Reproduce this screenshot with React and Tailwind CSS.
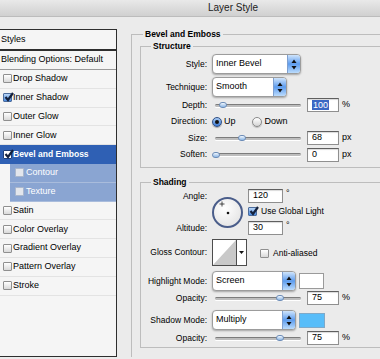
import React from "react";

const styleItems = [
  { label: "Drop Shadow" },
  { label: "Inner Shadow", checked: true },
  { label: "Outer Glow" },
  { label: "Inner Glow" },
  { label: "Bevel and Emboss", checked: true, active: true },
  { label: "Contour", sub: true },
  { label: "Texture", sub: true },
  { label: "Satin" },
  { label: "Color Overlay" },
  { label: "Gradient Overlay" },
  { label: "Pattern Overlay" },
  { label: "Stroke" },
];

function Tick({ color = "#14213d" }) {
  return (
    <svg width="10" height="10" viewBox="0 0 10 10" className="absolute -top-[2px] left-0">
      <path d="M1.5 5 L4 8 L9 1" fill="none" stroke={color} strokeWidth="2.2" />
    </svg>
  );
}

function Check({ checked, tone = "plain" }) {
  let box = "border-[#8f8f8f] bg-gradient-to-b from-white to-[#d9d9d9]";
  if (tone === "blue") box = "border-[#4c6c9c] bg-gradient-to-b from-[#b9d6f7] to-[#4a8ade]";
  if (tone === "active") box = "border-[#1d3f7a] bg-white";
  if (tone === "sub") box = "border-[#aab7cc] bg-[#e3e6ec]";
  return (
    <div className={`relative w-[9px] h-[9px] shrink-0 border rounded-[1px] ${box}`}>
      {checked && <Tick />}
    </div>
  );
}

function StylesList() {
  return (
    <div className="w-[117px] h-[328px] mt-[12px] shrink-0 bg-[#f5f5f5] border-t border-r border-b border-[#2e2e2e] text-[9px]">
      <div className="h-[21px] flex items-center pl-[1px] border-b-2 border-[#2e2e2e]">Styles</div>
      <div className="h-[19px] flex items-center pl-[1px] border-b border-[#9a9a9a]">Blending Options: Default</div>
      {styleItems.map((it) =>
        it.sub ? (
          <div key={it.label} className="h-[18.8px] ml-[10px] flex items-center gap-[2px] pl-[5px] bg-[#8aa5d2] border-b border-[#a9bcdc] text-white">
            <Check tone="sub" />
            <span>{it.label}</span>
          </div>
        ) : it.active ? (
          <div key={it.label} className="h-[18.8px] flex items-center gap-[1px] pl-[3px] bg-[#2f60b4] text-white font-bold text-[8.5px]">
            <Check checked tone="active" />
            <span>{it.label}</span>
          </div>
        ) : (
          <div key={it.label} className="h-[18.8px] flex items-center gap-[1px] pl-[3px] border-b border-[#e3e3e3]">
            <Check checked={it.checked} tone={it.checked ? "blue" : "plain"} />
            <span>{it.label}</span>
          </div>
        )
      )}
    </div>
  );
}

function Row({ label, className = "", children }) {
  return (
    <div className={`flex items-center ${className}`}>
      <div className="w-[66px] shrink-0 text-right text-[8.5px]">{label}</div>
      <div className="ml-[5px] flex items-center">{children}</div>
    </div>
  );
}

function Select({ value, w }) {
  return (
    <div className={`${w} h-[20px] flex rounded-[4px] border border-[#9c9c9c] bg-white shadow-[0_1px_2px_rgba(0,0,0,0.3)] overflow-hidden`}>
      <div className="flex-1 flex items-center pl-[3px] text-[9px]">{value}</div>
      <div className="w-[13px] flex items-center justify-center border-l border-[#7e9fcf] bg-gradient-to-b from-[#cfe4fb] via-[#5d9cee] to-[#bcdcfc]">
        <svg width="6" height="11" viewBox="0 0 6 11">
          <path d="M3 0.5 L5.5 4 L0.5 4 Z" fill="#111" />
          <path d="M3 10.5 L5.5 7 L0.5 7 Z" fill="#111" />
        </svg>
      </div>
    </div>
  );
}

function Slider({ at }) {
  return (
    <div className="relative ml-[3px] w-[86px] h-[10px] flex items-center">
      <div className="w-full h-[3px] rounded-full bg-[#bdbdbd] border-t border-[#7c7c7c] shadow-[0_1px_0_#ffffff]" />
      <div
        className="absolute top-[2px] w-[8px] h-[6px] rounded-full border border-[#6d8db8] bg-gradient-to-b from-[#f1f7fd] to-[#8cb6e4]"
        style={{ left: at - 4 }}
      />
    </div>
  );
}

function NumBox({ value, w = "w-[32px]", sel, className = "" }) {
  return (
    <div className={`${w} h-[14px] flex items-center pl-[4px] bg-white border border-[#8f8f8f] border-t-[#5f5f5f] shadow-[inset_0_1px_1px_rgba(0,0,0,0.15)] text-[9px] ${className}`}>
      {sel ? <span className="bg-[#3a67c4] text-white px-[1px] leading-[10px]">{value}</span> : value}
    </div>
  );
}

function Radio({ on }) {
  return on ? (
    <div className="w-[10px] h-[10px] rounded-full border border-[#2f4f85] bg-gradient-to-b from-[#a9cbf3] to-[#3d7ad3] flex items-center justify-center shadow-[0_1px_1px_rgba(0,0,0,0.3)]">
      <div className="w-[4px] h-[4px] rounded-full bg-[#111]" />
    </div>
  ) : (
    <div className="w-[10px] h-[10px] rounded-full border border-[#8a8a8a] bg-gradient-to-b from-white to-[#d4d4d4] shadow-[0_1px_1px_rgba(0,0,0,0.2)]" />
  );
}

function AngleDial() {
  return (
    <div className="row-span-3 self-center w-[31px] h-[31px] rounded-full border-2 border-[#4a5d8a] bg-[radial-gradient(circle_at_40%_35%,#ffffff,#dedede)]">
      <svg width="27" height="27" viewBox="0 0 27 27">
        <path d="M8 2.5 V7.5 M5.5 5 H10.5" stroke="#222" strokeWidth="0.8" />
        <circle cx="14" cy="14" r="1.3" fill="#111" />
      </svg>
    </div>
  );
}

export default function App() {
  return (
    <div className="w-[380px] h-[359px] overflow-hidden bg-[#ebebeb] text-black font-['Liberation_Sans',Arial,sans-serif]">
      <div className="h-[17px] flex items-center pl-[208px] bg-gradient-to-b from-[#e9e9e9] to-[#d0d0d0] border-b border-[#bcbcbc] text-[10px] leading-none text-[#1b1b1b]">
        Layer Style
      </div>

      <div className="flex">
        <StylesList />

        <fieldset className="ml-[14px] mt-[11px] w-[270px] shrink-0 border-l border-t border-[#bdbdbd]">
          <legend className="ml-[11px] px-[2px] text-[8.5px] font-bold leading-[12px]">Bevel and Emboss</legend>

          {/* Structure */}
          <fieldset className="ml-[8px] w-[255px] border border-[#bdbdbd] pt-[2px] pb-[4px]">
            <legend className="ml-[10px] px-[2px] text-[8.5px] font-bold leading-[12px]">Structure</legend>
            <Row label="Style:" className="h-[20px]">
              <Select value="Inner Bevel" w="w-[89px]" />
            </Row>
            <Row label="Technique:" className="h-[20px] mt-[3px]">
              <Select value="Smooth" w="w-[75px]" />
            </Row>
            <Row label="Depth:" className="h-[16px]">
              <Slider at={8} />
              <NumBox value="100" sel className="ml-[6px]" />
              <span className="ml-[3px] text-[9px]">%</span>
            </Row>
            <Row label="Direction:" className="h-[17px]">
              <Radio on />
              <span className="ml-[2px] text-[9px]">Up</span>
              <div className="ml-[16px]">
                <Radio />
              </div>
              <span className="ml-[3px] text-[9px]">Down</span>
            </Row>
            <Row label="Size:" className="h-[16px]">
              <Slider at={27} />
              <NumBox value="68" className="ml-[6px]" />
              <span className="ml-[3px] text-[9px]">px</span>
            </Row>
            <Row label="Soften:" className="h-[17px]">
              <Slider at={1} />
              <NumBox value="0" className="ml-[6px]" />
              <span className="ml-[3px] text-[9px]">px</span>
            </Row>
          </fieldset>

          {/* Shading */}
          <fieldset className="ml-[8px] mt-[8px] w-[255px] border border-[#bdbdbd] pb-[2px]">
            <legend className="ml-[10px] px-[2px] text-[8.5px] font-bold leading-[12px]">Shading</legend>

            <div className="mt-[1px] grid grid-cols-[66px_31px_auto] grid-rows-[14px_17px_16px] gap-x-[5px] items-center">
              <div className="text-right text-[8.5px]">Angle:</div>
              <AngleDial />
              <div className="flex items-center">
                <NumBox value="120" w="w-[35px]" />
                <span className="ml-[3px] self-start text-[9px] leading-[9px]">°</span>
              </div>
              <div />
              <div className="flex items-center">
                <Check checked tone="blue" />
                <span className="ml-[4px] text-[8.5px]">Use Global Light</span>
              </div>
              <div className="text-right text-[8.5px]">Altitude:</div>
              <div className="flex items-center">
                <NumBox value="30" w="w-[35px]" />
                <span className="ml-[3px] self-start text-[9px] leading-[9px]">°</span>
              </div>
            </div>

            <Row label="Gloss Contour:" className="h-[27px] mt-[3px]">
              <div className="w-[35px] h-[27px] flex border border-[#4d4d4d] bg-white">
                <svg width="23" height="25" viewBox="0 0 23 25" className="shrink-0">
                  <path d="M0 25 L23 0 L23 25 Z" fill="#c9c9c9" />
                </svg>
                <div className="flex-1 flex items-center justify-center border-l border-[#4d4d4d]">
                  <svg width="5" height="3" viewBox="0 0 5 3">
                    <path d="M0 0 H5 L2.5 3 Z" fill="#111" />
                  </svg>
                </div>
              </div>
              <div className="ml-[13px] self-start mt-[8px] flex items-center">
                <Check />
                <span className="ml-[4px] text-[8.5px]">Anti-aliased</span>
              </div>
            </Row>

            <Row label="Highlight Mode:" className="h-[20px] mt-[5px]">
              <Select value="Screen" w="w-[84px]" />
              <div className="ml-[3px] w-[25px] h-[16px] bg-white border border-[#9a9a9a]" />
            </Row>
            <Row label="Opacity:" className="h-[14px]">
              <Slider at={65} />
              <NumBox value="75" className="ml-[6px]" />
              <span className="ml-[3px] text-[9px]">%</span>
            </Row>
            <Row label="Shadow Mode:" className="h-[20px] mt-[5px]">
              <Select value="Multiply" w="w-[84px]" />
              <div className="ml-[3px] w-[26px] h-[15px] bg-[#58bdf9] border border-[#7fa9c8]" />
            </Row>
            <Row label="Opacity:" className="h-[14px] mt-[1px]">
              <Slider at={65} />
              <NumBox value="75" className="ml-[6px]" />
              <span className="ml-[3px] text-[9px]">%</span>
            </Row>
          </fieldset>
        </fieldset>
      </div>
    </div>
  );
}
